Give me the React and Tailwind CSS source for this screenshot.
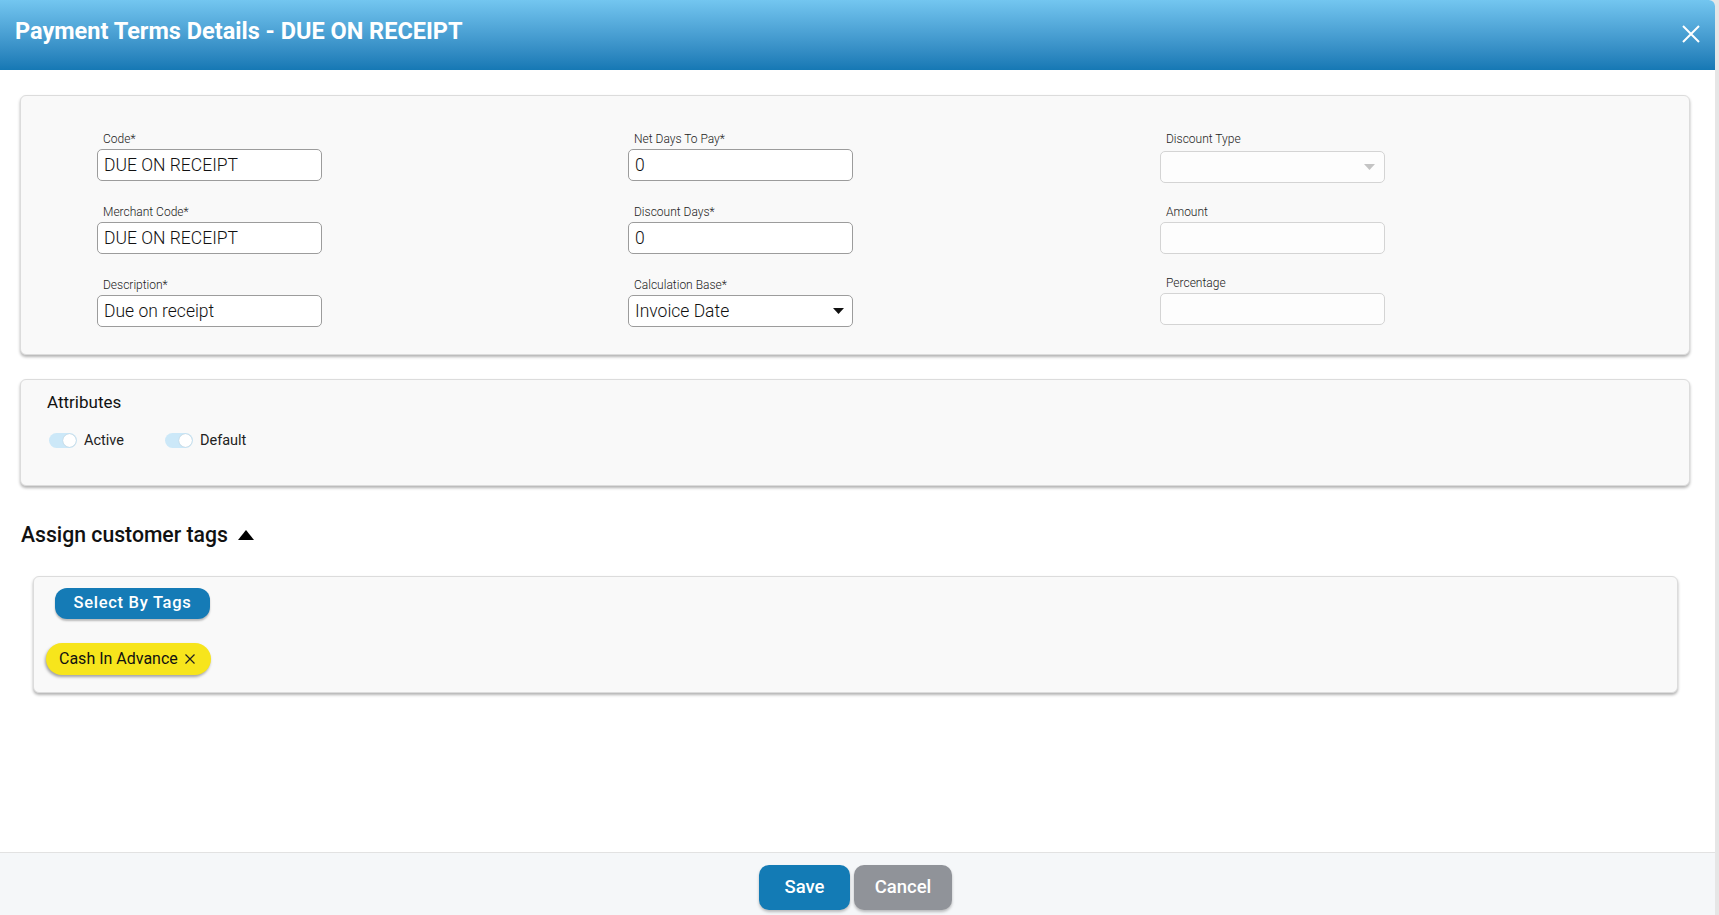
import React from "react";

const font = { fontFamily: "Roboto, 'Noto Sans', Arial, sans-serif" };

function Field({ label, value, select }) {
  return (
    <div className="flex flex-col">
      <div className="pl-[6px] text-[12px] font-light leading-[14px] text-[#222]">{label}</div>
      <div className="mt-[3px] flex h-[32px] w-[225px] items-center justify-between rounded-[5px] border border-[#9c9c9c] bg-white pl-[6px] pr-[8px] text-[17.5px] font-light text-[#111]">
        <span className="pt-[2px] leading-none">{value}</span>
        {select && (
          <svg width="11" height="6" viewBox="0 0 11 6">
            <path d="M0 0 L11 0 L5.5 6 Z" fill="#111" />
          </svg>
        )}
      </div>
    </div>
  );
}

function LightField({ label, select, extra }) {
  return (
    <div className="flex flex-col">
      <div className="pl-[6px] text-[12px] font-light leading-[14px] text-[#222]">{label}</div>
      <div
        className={
          "flex h-[32px] w-[225px] items-center justify-end rounded-[5px] border border-[#d4d4d4] bg-[#fdfdfd] pr-[9px] " +
          (extra ? "mt-[5px]" : "mt-[3px]")
        }
      >
        {select && (
          <svg width="11" height="6" viewBox="0 0 11 6">
            <path d="M0 0 L11 0 L5.5 6 Z" fill="#c4c4c4" />
          </svg>
        )}
      </div>
    </div>
  );
}

function Toggle({ label }) {
  return (
    <div className="flex items-center">
      <div className="relative h-[15px] w-[28px] rounded-full bg-[#cce8f8]">
        <div className="absolute right-[1px] top-[1px] h-[13px] w-[13px] rounded-full bg-white shadow-[0_0_1px_rgba(0,0,0,0.25)]" />
      </div>
      <span className="ml-[7px] text-[14.5px] text-[#222]">{label}</span>
    </div>
  );
}

export default function App() {
  return (
    <div className="flex h-[915px] w-full bg-[#e6e6e6]" style={font}>
      <div className="flex h-full w-[1715px] flex-col overflow-hidden rounded-tr-[6px] bg-white">
        {/* Header */}
        <div className="flex h-[70px] shrink-0 items-start justify-between bg-gradient-to-b from-[#73c6f0] to-[#1578b4] pl-[15px] pr-[15px]">
          <h1 className="mt-[17px] text-[23.5px] font-bold leading-[28px] text-white">
            Payment Terms Details - DUE ON RECEIPT
          </h1>
          <svg className="mt-[25px]" width="18" height="18" viewBox="0 0 18 18">
            <path d="M1 1 L17 17 M17 1 L1 17" stroke="white" strokeWidth="2" />
          </svg>
        </div>

        {/* Body */}
        <div className="flex flex-1 flex-col px-[20px] pt-[25px]">
          {/* Card 1 */}
          <div className="w-[1670px] rounded-[6px] border border-[#dcdcdc] bg-[#f9f9f9] pb-[27px] pl-[76px] pt-[36px] shadow-[0_2px_3px_rgba(0,0,0,0.3)]">
            <div className="grid grid-cols-[531px_532px_1fr]">
              <div className="flex flex-col gap-[24px]">
                <Field label="Code*" value="DUE ON RECEIPT" />
                <Field label="Merchant Code*" value="DUE ON RECEIPT" />
                <Field label="Description*" value="Due on receipt" />
              </div>
              <div className="flex flex-col gap-[24px]">
                <Field label="Net Days To Pay*" value="0" />
                <Field label="Discount Days*" value="0" />
                <Field label="Calculation Base*" value="Invoice Date" select />
              </div>
              <div className="flex flex-col gap-[22px]">
                <LightField label="Discount Type" select extra />
                <LightField label="Amount" />
                <LightField label="Percentage" />
              </div>
            </div>
          </div>

          {/* Card 2 */}
          <div className="mt-[24px] h-[107px] w-[1670px] rounded-[6px] border border-[#dcdcdc] bg-[#f9f9f9] pl-[26px] pt-[11px] shadow-[0_2px_3px_rgba(0,0,0,0.3)]">
            <div className="text-[17px] leading-[22px] text-[#111]">Attributes</div>
            <div className="mt-[17px] flex items-center gap-[41px] pl-[2px]">
              <Toggle label="Active" />
              <Toggle label="Default" />
            </div>
          </div>

          {/* Assign customer tags */}
          <div className="mt-[37px] flex items-center pl-[1px]">
            <span className="text-[21.2px] font-medium leading-[24px] text-[#111]">Assign customer tags</span>
            <svg className="ml-[10px]" width="16" height="10" viewBox="0 0 16 10">
              <path d="M0 10 L8 0 L16 10 Z" fill="#000" />
            </svg>
          </div>

          {/* Card 3 */}
          <div className="ml-[13px] mt-[29px] h-[117px] w-[1645px] rounded-[6px] border border-[#dcdcdc] bg-[#f9f9f9] pt-[11px] shadow-[0_2px_3px_rgba(0,0,0,0.3)]">
            <div className="pl-[21px]">
              <button className="flex h-[31px] w-[155px] items-center justify-center rounded-[12px] bg-[#157bb6] text-[16.5px] font-medium tracking-[0.7px] text-white shadow-[0_2px_2px_rgba(0,0,0,0.25)]">
                Select By Tags
              </button>
            </div>
            <div className="mt-[24px] pl-[12px]">
              <div className="flex h-[32px] w-[165px] items-center rounded-full bg-[#f7e51c] pl-[13px] shadow-[-1px_2px_3px_rgba(0,0,0,0.35)]">
                <span className="text-[16px] text-[#111]">Cash In Advance</span>
                <svg className="ml-[7px]" width="10" height="10" viewBox="0 0 10 10">
                  <path d="M0.5 0.5 L9.5 9.5 M9.5 0.5 L0.5 9.5" stroke="#222" strokeWidth="1.2" />
                </svg>
              </div>
            </div>
          </div>
        </div>

        {/* Footer */}
        <div className="flex h-[63px] shrink-0 justify-center gap-[4px] border-t border-[#e2e2e2] bg-[#f5f7f9] pr-[4px] pt-[12px]">
          <button className="h-[45px] w-[91px] rounded-[10px] bg-[#137bb5] text-[18.5px] font-medium text-white shadow-[0_2px_3px_rgba(0,0,0,0.25)]">
            Save
          </button>
          <button className="h-[45px] w-[98px] rounded-[10px] bg-[#909399] text-[18.5px] font-medium text-white shadow-[0_2px_3px_rgba(0,0,0,0.25)]">
            Cancel
          </button>
        </div>
      </div>
    </div>
  );
}
